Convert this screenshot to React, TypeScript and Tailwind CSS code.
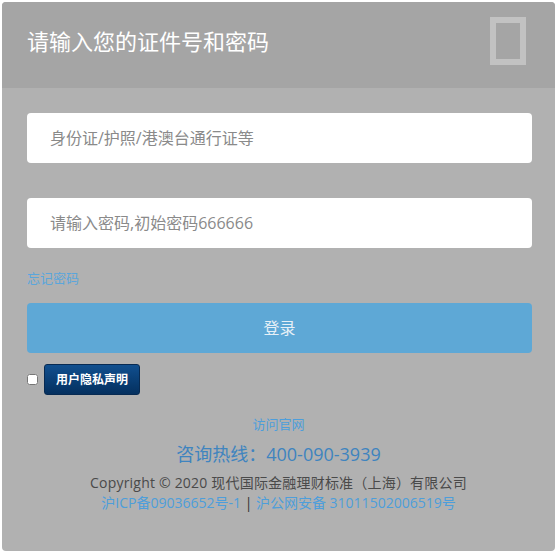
import React from 'react';

const font = { fontFamily: '"Open Sans", "Noto Sans CJK SC", sans-serif' };

export default function App() {
  return (
    <div className="min-h-[553px] bg-white p-[2px]" style={font}>
      <div className="h-[549px] rounded-[4px] bg-[#b1b1b1] overflow-hidden flex flex-col">
        <div className="h-[86px] bg-[#a5a5a5] flex items-start justify-between pl-[25px] pr-[29px]">
          <h1 className="mt-[23px] text-[22px] leading-[32px] text-white">请输入您的证件号和密码</h1>
          <div className="mt-[15px] w-[36px] h-[48px] border-[6px] border-[#c2c2c2]" />
        </div>

        <div className="pl-[25px] pr-[23px] pt-[25px] flex flex-col">
          <input
            className="h-[50px] rounded-[4px] bg-white px-[23px] text-[16px] text-[#555] placeholder-[#8a8a8a] outline-none"
            placeholder="身份证/护照/港澳台通行证等"
          />
          <input
            type="password"
            className="mt-[35px] h-[50px] rounded-[4px] bg-white px-[23px] text-[16px] text-[#555] placeholder-[#8a8a8a] outline-none"
            placeholder="请输入密码,初始密码666666"
          />
          <a className="mt-[20px] text-[13px] text-[#5aa6dc] leading-[20px]">忘记密码</a>
          <button className="mt-[15px] h-[50px] rounded-[4px] bg-[#5ea8d6] text-[16px] text-[#e6f0f7]">登录</button>
          <div className="mt-[11px] flex items-center gap-[6px]">
            <input type="checkbox" className="w-[11px] h-[11px] accent-white" />
            <button className="h-[31px] px-[11px] rounded-[3px] bg-gradient-to-b from-[#104f8f] to-[#05305f] border border-[#072a52] text-[12px] font-bold text-white">
              用户隐私声明
            </button>
          </div>
        </div>

        <div className="mt-[19px] flex flex-col items-center">
          <a className="text-[13px] text-[#4d9edb] leading-[20px]">访问官网</a>
          <div className="mt-[8px] text-[18px] text-[#3f84bf] leading-[24px]">咨询热线：400-090-3939</div>
          <div className="mt-[7px] text-[14px] text-[#4a4a4a] leading-[20px] tracking-[0.2px]">Copyright © 2020 现代国际金融理财标准（上海）有限公司</div>
          <div className="text-[14px] leading-[20px] text-[#4d9edb]">
            <a>沪ICP备09036652号-1</a>
            <span className="text-[#333]"> | </span>
            <a>沪公网安备 31011502006519号</a>
          </div>
        </div>
      </div>
    </div>
  );
}
